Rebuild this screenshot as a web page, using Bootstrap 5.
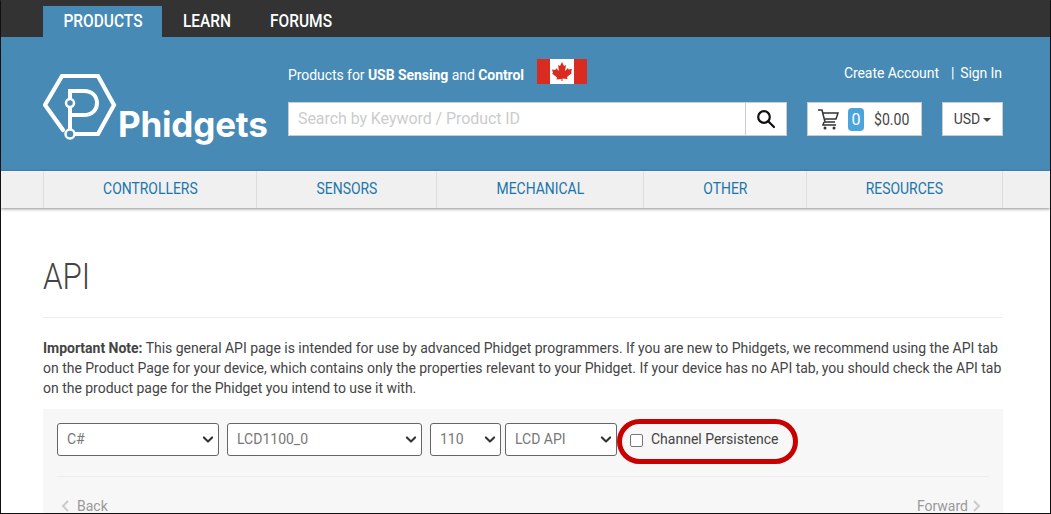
<!DOCTYPE html>
<html lang="en">
<head>
<meta charset="utf-8">
<title>API - Phidgets</title>
<link rel="stylesheet" href="https://cdn.jsdelivr.net/npm/bootstrap@5.3.0/dist/css/bootstrap.min.css">
<style>
html,body{height:100%;overflow:hidden;background:#fff}
body{font-family:Roboto,"Liberation Sans",sans-serif;font-size:14px;line-height:20px;color:#444}
.frame{height:514px;border:1px solid #111;border-top-color:#333;overflow:hidden;position:relative;background:#fff}
.wrap{width:960px;margin-left:42px}
.topbar{background:#333;height:36px;padding-top:5px}
.tab{display:block;height:31px;line-height:30px;color:#fff;font-size:18px;font-weight:500;text-decoration:none;text-align:center}
.tab.on{background:#468ab5}
.squeeze{display:inline-block;transform:scaleX(.86);white-space:nowrap}
.tab1{width:119px}.tab2{width:89px}.tab3{width:101px}
.blue{background:#468ab5;height:134px;color:#fff}
.logo{width:225px;margin-top:35px;position:relative;height:76px}
.logo svg{position:absolute;left:0;top:1px}
.wordmark{position:absolute;left:75px;top:32px;font-family:Inter,sans-serif;font-weight:700;font-size:35px;line-height:40px;letter-spacing:-.2px;color:#fff}
.mid{width:499px;margin-left:20px}
.tagline{height:65px;padding-top:11px;font-size:14px;line-height:32px;letter-spacing:-.06px}
.tagline b{font-weight:700}
.flag{margin-left:13px;margin-top:-8px}
.srch{height:34px}
.srch input{flex:1;height:34px;border:1px solid #ccc;border-right:0;border-radius:0;font-size:16px;letter-spacing:-.07px;padding:0 9px 2px;font-family:Roboto,sans-serif;outline:0;min-width:0}
.srch input::placeholder{color:#ccc;opacity:1}
.srch .go{width:42px;height:34px;border:1px solid #ccc;background:#fff;border-radius:0;padding:0}
.cart{width:115px;height:34px;margin-left:20px;margin-top:65px;background:#fff;border:1px solid #ccc;color:#444;font-size:16px;padding-left:10px}
.cart .num{width:16px;height:23px;border-radius:4px;background:#4aa5dd;color:#fff;font-size:16px;line-height:23px;text-align:center;margin:0 10px 0 9px;font-family:"Roboto",sans-serif}
.cart .amt{display:inline-block;transform:scaleX(.88);transform-origin:left center;padding-top:1px}
.cur{width:61px;height:34px;margin-left:20px;margin-top:65px;background:#fff;border:1px solid #ccc;color:#444;font-size:14px;border-radius:0;padding:0}
.cur::after{margin-left:3px;vertical-align:2px;border-top-width:4px;border-left-width:4px;border-right-width:4px}
.acct{position:absolute;right:1px;top:26px;font-size:14px;line-height:20px;color:#fff;letter-spacing:-.08px}
.acct a{color:#fff;text-decoration:none}
.acct .sep{margin:0 6px 0 12px}
.rail{background:#f0f0f0;height:37px;box-shadow:0 1px 3px rgba(0,0,0,.45);position:relative}
.cell{height:37px;border-left:1px solid #ddd;color:#1a75ab;font-size:16px;line-height:35px;text-align:center;text-decoration:none;display:block}
.cell .squeeze{transform:scaleX(.87)}
.cell.last{border-right:1px solid #ddd}
.c1{width:213px}.c2{width:180px}.c3{width:207px}.c4{width:163px}.c5{width:197px}
.pagehead{font-family:Roboto,sans-serif;font-weight:300;font-size:36px;line-height:40px;color:#444;margin:0;padding-top:49px}
.pagehead span{display:inline-block;transform:scaleX(.87);transform-origin:left center}
.rule{border-top:1px solid #eee;margin:20px 0 20px;opacity:1}
.note{margin:0 0 11px;letter-spacing:-.02px}
.note b{font-weight:700}
.panel{background:#f7f7f7;padding:14px 14px 0;height:110px}
.panel .form-select{height:33px;border:1px solid #666;border-radius:3px;background-color:#fff;color:#777;font-size:14px;padding:0 16px 0 9px;font-family:Roboto,sans-serif;line-height:31px;background-position:right 3px center;background-size:14px 11px;--bs-form-select-bg-img:url("data:image/svg+xml,%3csvg xmlns='http://www.w3.org/2000/svg' viewBox='0 0 16 16'%3e%3cpath fill='none' stroke='%23333' stroke-linecap='round' stroke-linejoin='round' stroke-width='3' d='m2 5 6 6 6-6'/%3e%3c/svg%3e")}
.panel .form-select.s1{flex:0 0 162px;width:162px}
.panel .form-select.s2{flex:0 0 195px;width:195px}
.panel .form-select.s3{flex:0 0 71px;width:71px}
.panel .form-select.s4{flex:0 0 112px;width:112px;margin-left:-4px}
.chk{margin-left:5px;height:33px;color:#444;font-size:14px;margin-top:-1px}
.chk input{margin:3px 8px 0 0;width:13px;height:13px;border:1px solid #777;border-radius:2px;background:#fff;appearance:none}
.rule2{border-top:1px solid #eee;margin:20px 0 19px;opacity:1}
.pager{color:#999;font-size:14px;line-height:20px;padding:0 8px 0 4px}
.pager svg{vertical-align:-1px}
.backlabel{margin-left:7px}
.fwdlabel{margin-right:4px}
.ring{position:absolute;left:616px;top:418px;width:181px;height:45px;border:5px solid #c90000;border-radius:23px;pointer-events:none}
</style>
</head>
<body class="m-0">
<div class="frame">
  <div class="topbar">
    <nav class="wrap d-flex">
      <a class="tab tab1 on" href="#"><span class="squeeze">PRODUCTS</span></a>
      <a class="tab tab2" href="#"><span class="squeeze">LEARN</span></a>
      <a class="tab tab3" href="#"><span class="squeeze">FORUMS</span></a>
    </nav>
  </div>
  <header class="blue">
    <div class="wrap d-flex position-relative">
      <div class="logo">
        <svg width="80" height="70" viewBox="0 0 80 70" fill="none" stroke="#fff">
          <path d="M20 57 2 32 19 3 55 3 71 32 55 61 27 61" stroke-width="4.200" stroke-linecap="round" stroke-linejoin="miter"/>
          <path d="M27 56V18h14c8 0 13 5 13 12s-5 12-13 12H27" stroke-width="4"/>
          <circle cx="27" cy="30" r="4" fill="#468ab5" stroke-width="2.500"/>
          <circle cx="27" cy="61" r="4.500" fill="#468ab5" stroke-width="2.500"/>
        </svg>
        <span class="wordmark">Phidgets</span>
      </div>
      <div class="mid">
        <div class="tagline d-flex align-items-center">
          <span>Products for <b>USB Sensing</b> and <b>Control</b></span>
          <svg class="flag" width="50" height="25" viewBox="0 0 50 25">
            <rect width="50" height="25" fill="#fff"/>
            <rect width="13" height="25" fill="#d92b1f"/>
            <rect x="37" width="13" height="25" fill="#d92b1f"/>
            <path d="M25 3l-2 4-2-1 1 6-3-3-.5 2-3.500-.5 1 3.500-1 .5 5 4-.5 2 5-.5V22h1v-2.500l5 .5-.5-2 5-4-1-.5 1-3.500-3.500.5L31 9l-3 3 1-6-2 1z" fill="#d92b1f"/>
          </svg>
        </div>
        <form class="srch d-flex" onsubmit="return false">
          <input type="text" placeholder="Search by Keyword / Product ID" aria-label="Search">
          <button class="go btn d-flex align-items-center justify-content-center" aria-label="Search">
            <svg width="20" height="20" viewBox="0 0 20 20" fill="none" stroke="#111" stroke-width="2.200"><circle cx="8" cy="8" r="5.800"/><path d="M12.200 12.200 18 18" stroke-linecap="round"/></svg>
          </button>
        </form>
      </div>
      <div class="cart d-flex align-items-center">
        <svg width="21" height="22" viewBox="0 0 21 22" fill="none" stroke="#333" stroke-width="1.500"><path d="M0 2h4l3 12h10M5 5h15l-2 6H7M6 14l-1 3h13"/><circle cx="7" cy="20" r="1.500" fill="#333" stroke="none"/><circle cx="16" cy="20" r="1.500" fill="#333" stroke="none"/></svg>
        <span class="num">0</span>
        <span class="amt">$0.00</span>
      </div>
      <button class="cur btn dropdown-toggle">USD</button>
      <div class="acct"><a href="#">Create Account</a><span class="sep">|</span><a href="#">Sign In</a></div>
    </div>
  </header>
  <div class="rail">
    <nav class="wrap d-flex">
      <a class="cell c1" href="#"><span class="squeeze">CONTROLLERS</span></a>
      <a class="cell c2" href="#"><span class="squeeze">SENSORS</span></a>
      <a class="cell c3" href="#"><span class="squeeze">MECHANICAL</span></a>
      <a class="cell c4" href="#"><span class="squeeze">OTHER</span></a>
      <a class="cell c5 last" href="#"><span class="squeeze">RESOURCES</span></a>
    </nav>
  </div>
  <main class="wrap">
    <h1 class="pagehead"><span>API</span></h1>
    <hr class="rule">
    <p class="note"><b>Important Note:</b> This general API page is intended for use by advanced Phidget programmers. If you are new to Phidgets, we recommend using the API tab on the Product Page for your device, which contains only the properties relevant to your Phidget. If your device has no API tab, you should check the API tab on the product page for the Phidget you intend to use it with.</p>
    <section class="panel">
      <div class="d-flex gap-2 align-items-center">
        <select class="form-select s1" aria-label="Language"><option>C#</option></select>
        <select class="form-select s2" aria-label="Device"><option>LCD1100_0</option></select>
        <select class="form-select s3" aria-label="Version"><option>110</option></select>
        <select class="form-select s4" aria-label="API"><option>LCD API</option></select>
        <label class="chk d-flex align-items-center"><input type="checkbox">Channel Persistence</label>
      </div>
      <hr class="rule2">
      <div class="pager d-flex justify-content-between">
        <span><svg width="9" height="12" viewBox="0 0 9 12" fill="none" stroke="#ccc" stroke-width="2"><path d="M7 1 2 6l5 5"/></svg><span class="backlabel">Back</span></span>
        <span><span class="fwdlabel">Forward</span><svg width="9" height="12" viewBox="0 0 9 12" fill="none" stroke="#ccc" stroke-width="2"><path d="M2 1l5 5-5 5"/></svg></span>
      </div>
    </section>
  </main>
  <div class="ring" aria-hidden="true"></div>
</div>
<script src="https://cdn.jsdelivr.net/npm/bootstrap@5.3.0/dist/js/bootstrap.bundle.min.js"></script>
</body>
</html>
